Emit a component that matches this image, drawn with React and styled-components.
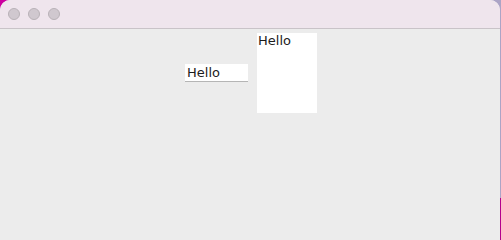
import React from "react";
import styled, { createGlobalStyle } from "styled-components";

const Global = createGlobalStyle`
  html, body { margin: 0; padding: 0; }
  body {
    width: 501px;
    height: 240px;
    overflow: hidden;
    background-image:
      linear-gradient(to bottom, transparent 198px, #b4008c 198px),
      linear-gradient(to right, #cc00a0 50%, #aca4c6 50%);
    font-family: "DejaVu Sans", "Liberation Sans", sans-serif;
  }
`;

const Window = styled.div`
  width: 500px;
  height: 240px;
  border-radius: 10px 10px 0 0;
  overflow: hidden;
  background: #ececec;
  display: flex;
  flex-direction: column;
`;

const TitleBar = styled.div`
  height: 28px;
  flex: none;
  background: #efe5ed;
  border-bottom: 1px solid #c9c3c8;
  display: flex;
  align-items: center;
  gap: 8px;
  padding-left: 8px;
`;

const Light = styled.span`
  width: 10px;
  height: 10px;
  border-radius: 50%;
  background: #d0c8cf;
  border: 1px solid #b8b1b7;
`;

const Content = styled.div`
  flex: 1;
  display: flex;
  align-items: flex-start;
  padding: 4px 0 0 185px;
  gap: 9px;
`;

const TextField = styled.div`
  margin-top: 31px;
  width: 61px;
  height: 17px;
  padding-left: 2px;
  background: #fff;
  border-bottom: 1px solid #b5b5b5;
  font-size: 13px;
  line-height: 17px;
  color: #1c1c1c;
`;

const TextArea = styled.div`
  width: 59px;
  height: 80px;
  padding-left: 1px;
  background: #fff;
  font-size: 13px;
  line-height: 16px;
  color: #1c1c1c;
`;

export default function App() {
  return (
    <>
      <Global />
      <Window>
        <TitleBar>
          <Light />
          <Light />
          <Light />
        </TitleBar>
        <Content>
          <TextField>Hello</TextField>
          <TextArea>Hello</TextArea>
        </Content>
      </Window>
    </>
  );
}
